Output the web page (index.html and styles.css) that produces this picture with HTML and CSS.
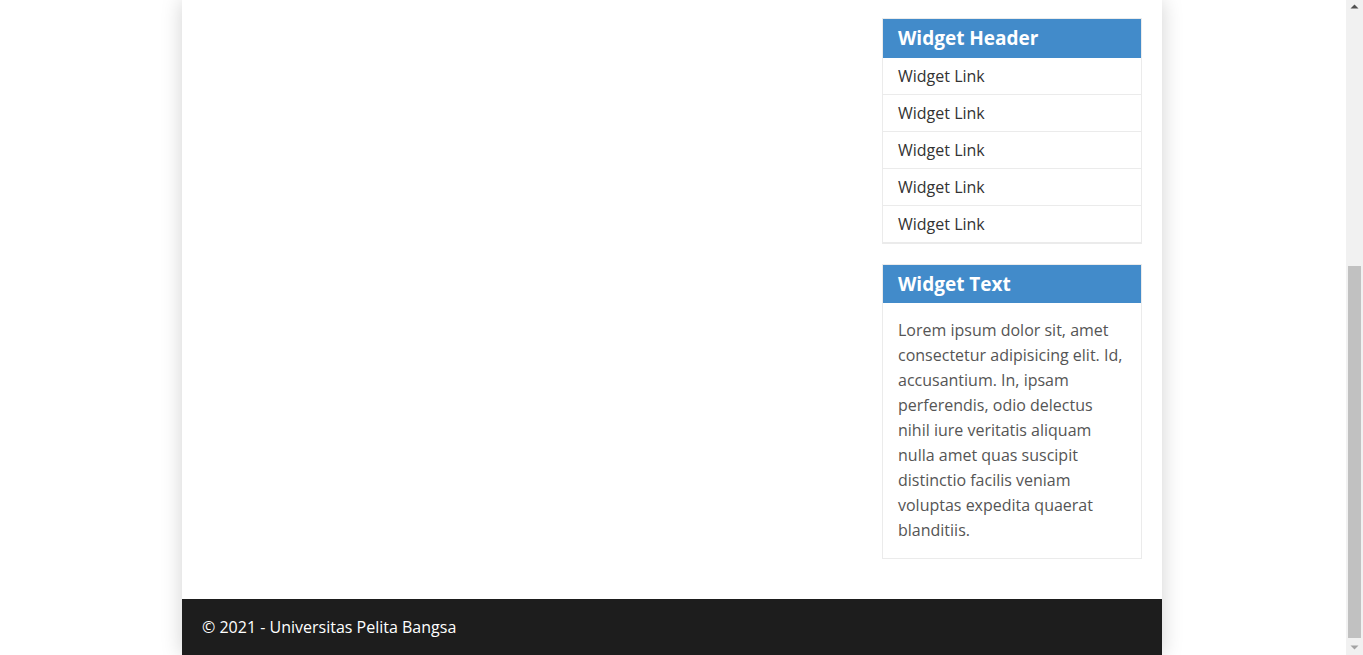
FILE: index.html
```html
<!DOCTYPE html>
<html lang="id">
<head>
<meta charset="utf-8">
<title>Universitas Pelita Bangsa</title>
<link rel="stylesheet" href="styles.css">
</head>
<body>
<div class="window">
  <div class="page">
    <div class="container">
      <div class="content">
        <main class="main"></main>
        <aside class="sidebar">
          <div class="widget">
            <h3 class="widget-title widget-title-first">Widget Header</h3>
            <ul class="widget-list">
              <li><a href="#">Widget Link</a></li>
              <li><a href="#">Widget Link</a></li>
              <li><a href="#">Widget Link</a></li>
              <li><a href="#">Widget Link</a></li>
              <li><a href="#">Widget Link</a></li>
            </ul>
          </div>
          <div class="widget">
            <h3 class="widget-title">Widget Text</h3>
            <p class="widget-text">Lorem ipsum dolor sit, amet consectetur adipisicing elit. Id, accusantium. In, ipsam perferendis, odio delectus nihil iure veritatis aliquam nulla amet quas suscipit distinctio facilis veniam voluptas expedita quaerat blanditiis.</p>
          </div>
        </aside>
      </div>
      <footer class="footer">
        <p>&copy; 2021 - Universitas Pelita Bangsa</p>
      </footer>
    </div>
  </div>
  <div class="scrollbar" aria-hidden="true">
    <div class="sb-btn">
      <svg width="17" height="17" viewBox="0 0 17 17"><path d="M4.5 8.5 L8.5 4.5 L12.5 8.5 Z" fill="#505050"/></svg>
    </div>
    <div class="sb-track">
      <div class="sb-thumb"></div>
    </div>
    <div class="sb-btn">
      <svg width="17" height="17" viewBox="0 0 17 17"><path d="M4.5 7.5 L8.5 11.5 L12.5 7.5 Z" fill="#a3a3a3"/></svg>
    </div>
  </div>
</div>
</body>
</html>
```

FILE: styles.css
```css
html, body {
  margin: 0;
  padding: 0;
  height: 100%;
  overflow: hidden;
  background: #fff;
  font-family: "Open Sans", "Liberation Sans", sans-serif;
}

.window {
  display: flex;
  height: 100vh;
}

.page {
  flex: 1;
  min-width: 0;
  padding-right: 2px;
  overflow: hidden;
  background: #fff;
}

.container {
  width: 980px;
  height: 100%;
  margin: 0 auto;
  display: flex;
  flex-direction: column;
  background: #fff;
  box-shadow: 0 0 20px rgba(0, 0, 0, 0.18);
}

.content {
  flex: 1;
  display: flex;
  gap: 20px;
  padding: 18px 20px 40px;
}

.main {
  flex: 1;
}

.sidebar {
  width: 260px;
  display: flex;
  flex-direction: column;
  gap: 20px;
}

.widget {
  border: 1px solid #ebebeb;
}

.widget-title {
  margin: 0;
  padding: 8px 15px;
  background: #428bca;
  color: #fff;
  font-size: 19px;
  font-weight: 700;
  line-height: 22px;
}

.widget-title-first {
  padding-bottom: 9px;
}

.widget-list {
  list-style: none;
  margin: 0;
  padding: 0;
}

.widget-list li {
  border-bottom: 1px solid #ebebeb;
}

.widget-list a {
  display: block;
  padding: 8px 15px;
  font-size: 16px;
  line-height: 20px;
  color: #333;
  text-decoration: none;
}

.widget-text {
  margin: 0;
  padding: 15px;
  font-size: 16px;
  line-height: 25px;
  color: #555;
}

.footer {
  background: #1d1d1d;
  padding: 18px 20px;
}

.footer p {
  margin: 0;
  color: #fff;
  font-size: 16px;
  line-height: 20px;
}

.scrollbar {
  width: 17px;
  flex-shrink: 0;
  display: flex;
  flex-direction: column;
  background: #f1f1f1;
}

.sb-btn {
  height: 17px;
  flex-shrink: 0;
}

.sb-btn svg {
  display: block;
}

.sb-track {
  flex: 1;
  display: flex;
  flex-direction: column;
  justify-content: flex-end;
  padding: 0 2px;
}

.sb-thumb {
  height: 372px;
  background: #c1c1c1;
}
```
